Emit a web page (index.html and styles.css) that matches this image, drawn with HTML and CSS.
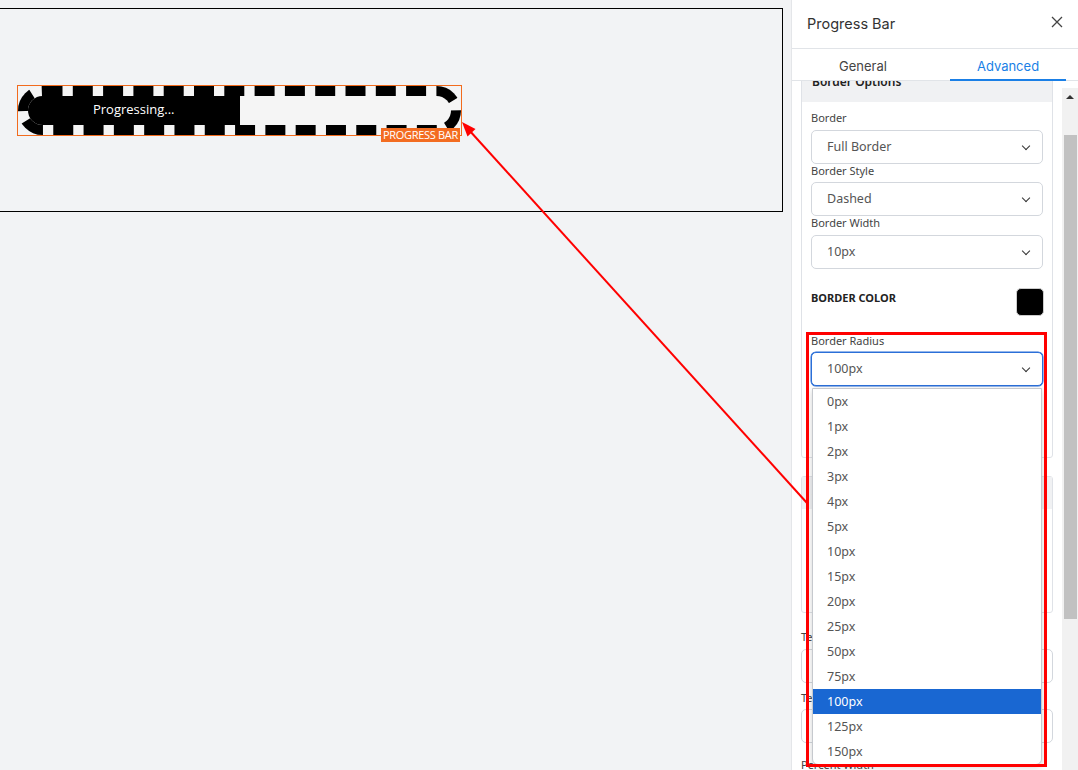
FILE: index.html
```html
<!DOCTYPE html>
<html lang="en">
<head>
  <meta charset="UTF-8" />
  <meta name="viewport" content="width=device-width, initial-scale=1" />
  <title>Progress Bar - Advanced</title>
  <link rel="stylesheet" href="styles.css">
</head>
<body>
  <div class="app">
    <main class="canvas">
      <div class="frame">
        <div class="pb-wrap">
          <div class="pb">
            <div class="pb-fill">Progressing...</div>
          </div>
          <span class="pb-tag">PROGRESS BAR</span>
        </div>
      </div>
    </main>

    <aside class="panel">
      <div class="panel-head">
        <h1>Progress Bar</h1>
        <button type="button" class="close" aria-label="Close">
          <svg width="12" height="12" viewBox="0 0 12 12"><path d="M1 1L11 11M11 1L1 11" stroke="#444" stroke-width="1.3" fill="none"/></svg>
        </button>
      </div>
      <div class="tabs">
        <button type="button" class="tab">General</button>
        <button type="button" class="tab active">Advanced</button>
      </div>

      <div class="panel-body">
        <div class="scroll">
          <div class="scroll-inner">
            <section class="card">
              <div class="card-head">Border Options</div>
              <div class="card-body">
                <div class="field">
                  <label>Border</label>
                  <div class="select">Full Border<span class="chev"></span></div>
                </div>
                <div class="field">
                  <label>Border Style</label>
                  <div class="select">Dashed<span class="chev"></span></div>
                </div>
                <div class="field">
                  <label>Border Width</label>
                  <div class="select">10px<span class="chev"></span></div>
                </div>
                <div class="color-row">
                  <span>BORDER COLOR</span>
                  <span class="swatch"></span>
                </div>
                <div class="field radius">
                  <label>Border Radius</label>
                  <div class="select focus">100px<span class="chev"></span>
                    <ul class="dropdown">
                      <li>0px</li>
                      <li>1px</li>
                      <li>2px</li>
                      <li>3px</li>
                      <li>4px</li>
                      <li>5px</li>
                      <li>10px</li>
                      <li>15px</li>
                      <li>20px</li>
                      <li>25px</li>
                      <li>50px</li>
                      <li>75px</li>
                      <li class="selected">100px</li>
                      <li>125px</li>
                      <li>150px</li>
                    </ul>
                  </div>
                </div>
              </div>
            </section>

            <section class="card second">
              <div class="card-head">Size</div>
              <div class="card-body tall"></div>
            </section>

            <div class="field loose">
              <label>Text Color</label>
              <div class="select">Default<span class="chev"></span></div>
            </div>
            <div class="field loose">
              <label>Text Size</label>
              <div class="select">13px<span class="chev"></span></div>
            </div>
            <div class="field looser">
              <label>Percent Width</label>
            </div>
          </div>
        </div>
        <div class="scrollbar">
          <span class="sb-up"></span>
          <span class="sb-thumb"></span>
        </div>
      </div>
    </aside>
  </div>

  <!-- annotation -->
  <div class="mark"></div>
  <svg class="arrow" width="1078" height="770" viewBox="0 0 1078 770">
    <line x1="807" y1="503" x2="469" y2="130" stroke="#ff0000" stroke-width="2"/>
    <polygon points="462,122 475.5,129 467.5,136.5" fill="#ff0000"/>
  </svg>
</body>
</html>
```

FILE: styles.css
```css
body {
  margin: 0;
  font-family: 'Noto Sans', sans-serif;
  color: #333;
  background: #f2f3f5;
  overflow: hidden;
}
.app {
  display: flex;
  height: 770px;
}
.canvas {
  width: 791px;
  flex: none;
  padding-top: 8px;
  box-sizing: border-box;
  background: #f2f3f5;
}
.frame {
  margin-left: -1px;
  width: 784px;
  height: 204px;
  box-sizing: border-box;
  border: 1px solid #000;
  padding: 76px 0 0 17px;
}
.pb-wrap {
  position: relative;
  width: 445px;
  height: 51px;
  box-sizing: border-box;
  border: 1px solid #f26b1d;
}
.pb {
  height: 100%;
  box-sizing: border-box;
  border: 10px dashed #000;
  border-radius: 100px;
  background: #f5f5f5;
  overflow: hidden;
}
.pb-fill {
  width: 50%;
  height: 100%;
  box-sizing: border-box;
  padding-bottom: 3px;
  background: #000;
  color: #fff;
  font-family: 'Open Sans', sans-serif;
  font-size: 13px;
  display: flex;
  align-items: center;
  justify-content: center;
}
.pb-tag {
  position: absolute;
  right: 1px;
  bottom: -7px;
  background: #f36c21;
  color: #fff;
  font-family: 'Open Sans', sans-serif;
  font-size: 11px;
  line-height: 14px;
  letter-spacing: -0.3px;
  padding: 0 2px;
}

/* side panel */
.panel {
  width: 287px;
  flex: none;
  box-sizing: border-box;
  border-left: 1px solid #e4e6e9;
  background: #fff;
  display: flex;
  flex-direction: column;
}
.panel-head {
  height: 49px;
  box-sizing: border-box;
  border-bottom: 1px solid #e1e4e8;
  display: flex;
  align-items: center;
  justify-content: space-between;
  padding: 0 14px 2px 15px;
}
.panel-head h1 {
  margin: 0;
  font-family: Inter, sans-serif;
  font-size: 14.5px;
  font-weight: 400;
  color: #333;
}
.close {
  border: none;
  background: none;
  padding: 0;
  width: 14px;
  height: 14px;
  display: flex;
  align-items: center;
  justify-content: center;
  margin-bottom: 2px;
}
.tabs {
  height: 32px;
  box-sizing: border-box;
  border-bottom: 1px solid #e1e4e8;
  display: grid;
  grid-template-columns: 116px 116px;
  column-gap: 29px;
  padding-left: 13px;
}
.tab {
  border: none;
  background: none;
  padding: 3px 0 0;
  font-family: Inter, sans-serif;
  font-size: 13px;
  color: #444;
  margin-bottom: -1px;
  border-bottom: 2px solid transparent;
}
.tab.active {
  color: #1a7fe6;
  border-bottom-color: #1a7fe6;
}
.panel-body {
  flex: 1;
  display: flex;
  min-height: 0;
}
.scroll {
  flex: 1;
  overflow: hidden;
  padding: 0 9px;
}
.scroll-inner {
  margin-top: -22px;
}
.card {
  border: 1px solid #dfe2e7;
  border-radius: 3px;
}
.card-head {
  background: #f0f1f3;
  height: 42px;
  line-height: 43px;
  overflow: hidden;
  padding-left: 10px;
  font-size: 12px;
  font-weight: 600;
  color: #222;
}
.card-body {
  padding: 9px 9px 71px;
}
.card-body.tall {
  height: 103px;
  padding: 0;
}
.second {
  margin-top: 18px;
}
.second .card-head {
  height: 32px;
  line-height: 30px;
}
.field label {
  display: block;
  font-size: 11px;
  line-height: 14.5px;
  color: #444;
  margin-bottom: 4px;
}
.select {
  position: relative;
  height: 34px;
  box-sizing: border-box;
  border: 1px solid #d3d7dd;
  border-radius: 5px;
  padding-left: 15px;
  font-size: 12.5px;
  line-height: 32px;
  color: #555;
  background: #fff;
}
.chev {
  position: absolute;
  right: 13px;
  top: 12px;
  width: 5px;
  height: 5px;
  border-right: 1.3px solid #333;
  border-bottom: 1.3px solid #333;
  transform: rotate(45deg);
}
.select.focus {
  border-color: #2b6fd8;
  box-shadow: 0 0 0 0.5px #2b6fd8;
}
.color-row {
  margin-top: 19px;
  height: 28px;
  display: flex;
  align-items: flex-start;
  justify-content: space-between;
  font-size: 11px;
  line-height: 20px;
  font-weight: 700;
  color: #222;
}
.swatch {
  width: 28px;
  height: 28px;
  box-sizing: border-box;
  background: #000;
  border: 1px solid #ccc;
  border-radius: 5px;
  margin-right: -1px;
}
.field.radius {
  margin-top: 18px;
}
.dropdown {
  position: absolute;
  top: 35px;
  left: 0;
  right: 0;
  margin: 0;
  padding: 0;
  list-style: none;
  background: #fff;
  border: 1px solid #c6c9ce;
  border-radius: 0 0 6px 6px;
  box-shadow: 0 2px 6px rgba(0, 0, 0, 0.18);
  z-index: 5;
}
.dropdown li {
  height: 25px;
  line-height: 25px;
  padding-left: 14px;
  font-size: 12.5px;
  color: #555;
}
.dropdown li.selected {
  background: #1967d2;
  color: #fff;
}
.field.loose {
  margin-top: 17px;
}
.field.loose + .field.loose {
  margin-top: 8px;
}
.field.looser {
  margin-top: 15px;
}

/* fake scrollbar */
.scrollbar {
  width: 16px;
  flex: none;
  margin-top: 7px;
  background: #f1f1f1;
  position: relative;
}
.sb-up {
  position: absolute;
  top: 7px;
  left: 4px;
  border-left: 4px solid transparent;
  border-right: 4px solid transparent;
  border-bottom: 4px solid #333;
}
.sb-thumb {
  position: absolute;
  top: 47px;
  left: 2px;
  right: 1px;
  height: 484px;
  background: #c1c1c1;
}

/* annotation overlay */
.mark {
  position: absolute;
  left: 806px;
  top: 332px;
  width: 241px;
  height: 435px;
  box-sizing: border-box;
  border: 3px solid #ff0000;
  z-index: 10;
}
.arrow {
  position: absolute;
  left: 0;
  top: 0;
  pointer-events: none;
  z-index: 11;
}
```
